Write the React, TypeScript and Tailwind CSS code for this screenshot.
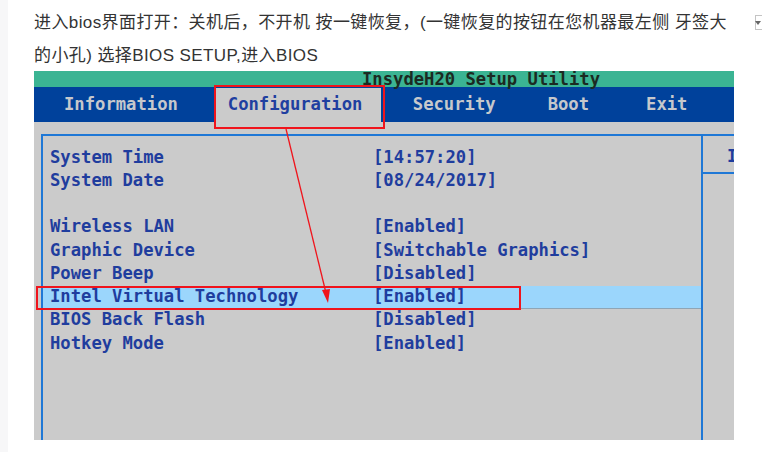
const rows: { label: string; value: string; active?: boolean }[] = [
  { label: "System Time", value: "[14:57:20]" },
  { label: "System Date", value: "[08/24/2017]" },
  { label: "", value: "" },
  { label: "Wireless LAN", value: "[Enabled]" },
  { label: "Graphic Device", value: "[Switchable Graphics]" },
  { label: "Power Beep", value: "[Disabled]" },
  { label: "Intel Virtual Technology", value: "[Enabled]", active: true },
  { label: "BIOS Back Flash", value: "[Disabled]" },
  { label: "Hotkey Mode", value: "[Enabled]" },
];

const mono = "font-['DejaVu_Sans_Mono',monospace] font-bold text-[17.2px]";

const BiosShot = () => {
  return (
    <div className="relative ml-[26px] w-[700px] h-[369px] overflow-hidden bg-[#cbcbcb]">
      {/* title bar */}
      <div
        className={`h-[16px] bg-[#3bb493] text-[#1b2a22] leading-[16px] pl-[328px] whitespace-pre ${mono}`}
      >
        InsydeH20 Setup Utility
      </div>

      {/* tabs */}
      <div
        className={`flex items-stretch h-[35px] bg-[#00419b] text-[#c6c8cc] whitespace-pre ${mono}`}
      >
        <span className="pl-[30px] self-center">Information</span>
        <div className="ml-[38px] mt-[1px] w-[165px] pl-[12px] bg-[#cbcbcb] text-[#1f3fa0] flex items-center">
          Configuration
        </div>
        <span className="ml-[32px] self-center">Security</span>
        <span className="ml-[52px] self-center">Boot</span>
        <span className="ml-[57px] self-center">Exit</span>
      </div>

      {/* body */}
      <div className="pt-[12px] pl-[7px] h-[318px]">
        <div className="flex h-full border-l-2 border-t-2 border-[#1f78d6]">
          <div className="w-[658px] pt-[10px]">
            {rows.map((r, i) => (
              <div
                key={i}
                className={`flex h-[23.25px] items-center whitespace-pre text-[#1f3d9e] ${mono} ${
                  r.active ? "bg-[#9bd6fc] border-b border-[#8fa5b5]" : ""
                }`}
              >
                <span className="w-[330px] pl-[7px]">{r.label}</span>
                <span>{r.value}</span>
              </div>
            ))}
          </div>
          <div className="flex-1 border-l-2 border-[#1f78d6] overflow-hidden">
            <div
              className={`h-[38px] pl-[24px] pt-[8px] border-b-2 border-[#1f78d6] text-[#1f3d9e] ${mono}`}
            >
              I
            </div>
          </div>
        </div>
      </div>

      {/* annotations */}
      <div className="absolute left-[180px] top-[14px] w-[171px] h-[44px] border-2 border-[#f0141c]" />
      <div className="absolute left-[2px] top-[215px] w-[485px] h-[24px] border-2 border-[#f0141c]" />
      <svg className="absolute left-0 top-0" width="700" height="369">
        <line x1="252" y1="58" x2="292" y2="222" stroke="#f0141c" strokeWidth="1.3" />
        <polygon points="294,232 288,219 296,218" fill="#f0141c" />
      </svg>
    </div>
  );
};

const App = () => {
  return (
    <div className="relative w-[762px] h-[452px] overflow-hidden bg-white flex">
      <div className="w-[8px] h-full bg-[#f7f7f8] shrink-0" />
      <div className="flex-1">
        <div className="h-[71px] pt-[6px] pl-[26px] text-[17px] leading-[33px] tracking-[0.4px] text-[#333333] font-['Liberation_Sans','Noto_Sans_CJK_SC',sans-serif] whitespace-nowrap">
          <div>进入bios界面打开：关机后，不开机 按一键恢复，(一键恢复的按钮在您机器最左侧 牙签大</div>
          <div>的小孔) 选择BIOS SETUP,进入BIOS</div>
        </div>
        <BiosShot />
      </div>
      <div className="absolute left-[755px] top-[15px] w-[7px] h-[15px] border-l border-t border-b border-[#c4c4c4] bg-white flex items-center justify-end pr-[1px]">
        <div className="w-0 h-0 border-l-[3px] border-r-[3px] border-t-[4px] border-l-transparent border-r-transparent border-t-[#666]" />
      </div>
    </div>
  );
};

export default App;
